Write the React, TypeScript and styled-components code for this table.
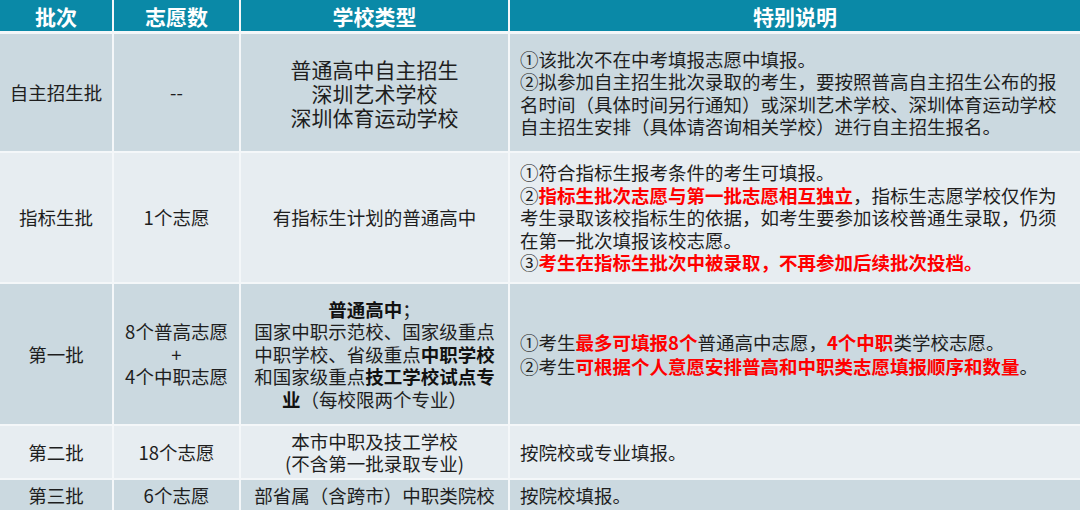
import React from 'react';
import styled, { createGlobalStyle } from 'styled-components';

const GlobalStyle = createGlobalStyle`
  html, body {
    margin: 0;
    padding: 0;
    background: #ffffff;
  }
  body {
    font-family: "Noto Sans CJK SC", "Noto Sans", sans-serif;
    color: #1e1e1e;
  }
`;

const Table = styled.div`
  display: flex;
  flex-direction: column;
  gap: 2px;
  width: 1080px;
  background: #f4f7f9;
`;

const Row = styled.div<{ $h: number; $tone: 'head' | 'dark' | 'light' }>`
  display: grid;
  grid-template-columns: 112px 125px 267px 1fr;
  column-gap: 2px;
  height: ${(p) => p.$h}px;
  margin-bottom: ${(p) => (p.$tone === 'head' ? '1px' : '0')};
  --cell-bg: ${(p) =>
    p.$tone === 'head' ? '#0a89a7' : p.$tone === 'dark' ? '#cbd9e0' : '#e7edf1'};
`;

const HeadCell = styled.div`
  background: var(--cell-bg);
  color: #ffffff;
  font-weight: 700;
  font-size: 21px;
  display: flex;
  align-items: center;
  justify-content: center;
`;

const Cell = styled.div<{ $big?: boolean }>`
  background: var(--cell-bg);
  display: flex;
  flex-direction: column;
  align-items: center;
  justify-content: center;
  text-align: center;
  font-size: ${(p) => (p.$big ? '21px' : '18.5px')};
  line-height: ${(p) => (p.$big ? '24px' : '22.5px')};
  white-space: nowrap;
`;

const NoteCell = styled.div<{ $spaced?: boolean }>`
  background: var(--cell-bg);
  display: flex;
  flex-direction: column;
  justify-content: center;
  padding-left: 10px;
  font-size: 18.5px;
  line-height: ${(p) => (p.$spaced ? '24.5px' : '22.5px')};
  white-space: nowrap;
`;

const Red = styled.b`
  color: #ff0000;
  font-weight: 700;
`;

const Strong = styled.b`
  color: #111111;
  font-weight: 700;
`;

export default function App() {
  return (
    <>
      <GlobalStyle />
      <Table>
        <Row $h={31} $tone="head">
          <HeadCell>批次</HeadCell>
          <HeadCell>志愿数</HeadCell>
          <HeadCell>学校类型</HeadCell>
          <HeadCell>特别说明</HeadCell>
        </Row>

        <Row $h={117} $tone="dark">
          <Cell>自主招生批</Cell>
          <Cell>--</Cell>
          <Cell $big>
            <span>普通高中自主招生</span>
            <span>深圳艺术学校</span>
            <span>深圳体育运动学校</span>
          </Cell>
          <NoteCell>
            <span>①该批次不在中考填报志愿中填报。</span>
            <span>②拟参加自主招生批次录取的考生，要按照普高自主招生公布的报</span>
            <span>名时间（具体时间另行通知）或深圳艺术学校、深圳体育运动学校</span>
            <span>自主招生安排（具体请咨询相关学校）进行自主招生报名。</span>
          </NoteCell>
        </Row>

        <Row $h={129} $tone="light">
          <Cell>指标生批</Cell>
          <Cell>1个志愿</Cell>
          <Cell>有指标生计划的普通高中</Cell>
          <NoteCell>
            <span>①符合指标生报考条件的考生可填报。</span>
            <span>
              ②<Red>指标生批次志愿与第一批志愿相互独立</Red>，指标生志愿学校仅作为
            </span>
            <span>考生录取该校指标生的依据，如考生要参加该校普通生录取，仍须</span>
            <span>在第一批次填报该校志愿。</span>
            <span>
              ③<Red>考生在指标生批次中被录取，不再参加后续批次投档。</Red>
            </span>
          </NoteCell>
        </Row>

        <Row $h={140} $tone="dark">
          <Cell>第一批</Cell>
          <Cell>
            <span>8个普高志愿</span>
            <span>+</span>
            <span>4个中职志愿</span>
          </Cell>
          <Cell>
            <span>
              <Strong>普通高中</Strong>；
            </span>
            <span>国家中职示范校、国家级重点</span>
            <span>
              中职学校、省级重点<Strong>中职学校</Strong>
            </span>
            <span>
              和国家级重点<Strong>技工学校试点专</Strong>
            </span>
            <span>
              <Strong>业</Strong>（每校限两个专业）
            </span>
          </Cell>
          <NoteCell $spaced>
            <span>
              ①考生<Red>最多可填报8个</Red>普通高中志愿，<Red>4个中职</Red>类学校志愿。
            </span>
            <span>
              ②考生<Red>可根据个人意愿安排普高和中职类志愿填报顺序和数量</Red>。
            </span>
          </NoteCell>
        </Row>

        <Row $h={52} $tone="light">
          <Cell>第二批</Cell>
          <Cell>18个志愿</Cell>
          <Cell>
            <span>本市中职及技工学校</span>
            <span>(不含第一批录取专业)</span>
          </Cell>
          <NoteCell>
            <span>按院校或专业填报。</span>
          </NoteCell>
        </Row>

        <Row $h={30} $tone="dark">
          <Cell>第三批</Cell>
          <Cell>6个志愿</Cell>
          <Cell>部省属（含跨市）中职类院校</Cell>
          <NoteCell>
            <span>按院校填报。</span>
          </NoteCell>
        </Row>
      </Table>
    </>
  );
}
